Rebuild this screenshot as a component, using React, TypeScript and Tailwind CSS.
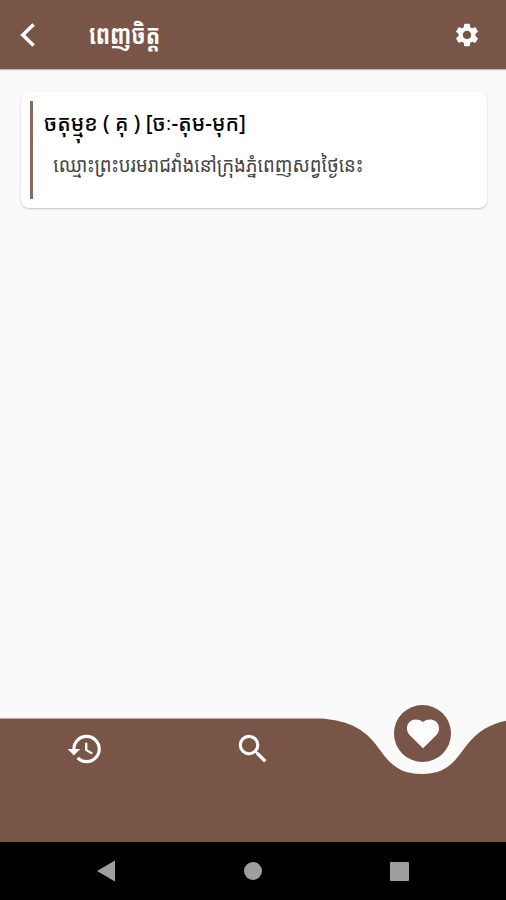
import { MdHistory, MdSearch, MdSettings } from "react-icons/md";

type Entry = {
  word: string;
  meaning: string;
};

const ENTRIES: Entry[] = [
  {
    word: "ចតុម្មុខ ( គុ ) [ចៈ-តុម-មុក]",
    meaning: "ឈ្មោះព្រះបរមរាជវាំងនៅក្រុងភ្នំពេញសព្វថ្ងៃនេះ",
  },
];

function Header() {
  return (
    <header className="flex h-[69px] shrink-0 items-center bg-[#795548] pl-5 pr-[25px] text-white shadow-[0_1px_1px_rgba(121,85,72,0.4)]">
      <button type="button" aria-label="Back">
        <svg className="h-7 w-7" viewBox="0 0 28 28" fill="none" stroke="currentColor" strokeWidth="3.5">
          <path d="M13.6 3.4L2.8 14L13.6 24.6" />
        </svg>
      </button>
      <h1 className="ml-[41px] flex-1 origin-left scale-x-[0.79] whitespace-nowrap pb-0.5 text-[27px] font-bold leading-none">
        ពេញចិត្ត
      </h1>
      <button type="button" aria-label="Settings">
        <MdSettings className="h-7 w-7" />
      </button>
    </header>
  );
}

function EntryCard({ word, meaning }: Entry) {
  return (
    <article className="flex h-[116px] rounded-lg bg-white py-[9px] pl-[9px] shadow-[0_1px_2px_rgba(0,0,0,0.22)]">
      <div className="w-[3px] shrink-0 bg-[#8a6a5e]" />
      <div className="flex flex-col pl-[11px]">
        <h2 className="h-[44px] origin-left scale-x-[0.945] whitespace-nowrap text-[22px] font-medium leading-[43px] text-black">
          {word}
        </h2>
        <p className="h-[40px] origin-left scale-x-[0.93] whitespace-nowrap pl-[10px] text-[20px] leading-[40px] text-[#444]">
          {meaning}
        </p>
      </div>
    </article>
  );
}

function BottomNav() {
  return (
    <nav className="relative h-[124px] shrink-0">
      {/* Bar with a dip below the active tab */}
      <svg className="absolute inset-0 h-full w-full" viewBox="0 0 506 124" fill="#795548">
        <path d="M0 .5H320.5C391.3 5 371.1 56 421.7 56C472.3 56 452 5 522.9 .5V124H0Z" />
      </svg>
      <div className="relative grid grid-cols-3 justify-items-center text-white">
        <button type="button" aria-label="History" className="pl-px pt-3">
          <MdHistory className="h-[38px] w-[38px]" />
        </button>
        <button type="button" aria-label="Search" className="pl-px pt-3">
          <MdSearch className="h-[38px] w-[38px]" />
        </button>
        <button
          type="button"
          aria-label="Favorites"
          className="-mt-[13px] ml-[2px] flex h-[57px] w-[57px] items-center justify-center rounded-full bg-[#795548]"
        >
          <svg className="h-[38px] w-[38px]" viewBox="0 0 38 38" fill="currentColor">
            <path d="M19 33.2L5.8 20.3C3.9 18.3 3 16 3 13.2C3 8.2 6.8 4.5 11.5 4.5C14.6 4.5 17 5.3 19 7C21 5.3 23.4 4.5 26.5 4.5C31.2 4.5 35 8.2 35 13.2C35 16 34.1 18.3 32.2 20.3Z" />
          </svg>
        </button>
      </div>
    </nav>
  );
}

function SystemBar() {
  return (
    <footer className="flex h-[58px] shrink-0 items-center justify-between bg-black pl-[96px] pr-[97px]">
      <svg className="h-[22px] w-[19px]" viewBox="0 0 19 22" fill="#9e9e9e">
        <path d="M19 .5V21.5L1 11Z" />
      </svg>
      <div className="ml-px h-[18px] w-[18px] rounded-full bg-[#9e9e9e]" />
      <div className="h-[19px] w-[19px] rounded-[1px] bg-[#9e9e9e]" />
    </footer>
  );
}

export default function App() {
  return (
    <div className="flex h-[900px] w-[506px] flex-col overflow-hidden bg-[#fafafa] font-['Noto_Sans_Khmer','Roboto','Noto_Sans',sans-serif]">
      <Header />
      <main className="flex-1 pl-[21px] pr-[19px] pt-[23px]">
        {ENTRIES.map((entry) => (
          <EntryCard key={entry.word} {...entry} />
        ))}
      </main>
      <BottomNav />
      <SystemBar />
    </div>
  );
}
